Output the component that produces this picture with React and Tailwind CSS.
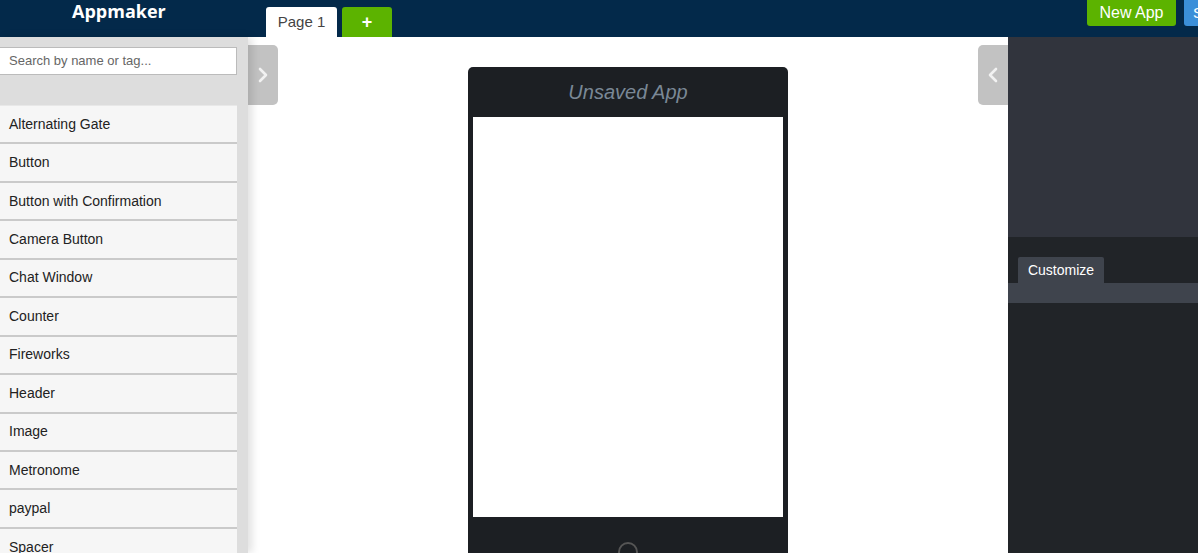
import React from "react";

const components = [
  "Alternating Gate",
  "Button",
  "Button with Confirmation",
  "Camera Button",
  "Chat Window",
  "Counter",
  "Fireworks",
  "Header",
  "Image",
  "Metronome",
  "paypal",
  "Spacer",
];

const Chevron = ({ dir }) => (
  <svg width="12" height="16" viewBox="0 0 12 16" fill="none">
    <path
      d={dir === "right" ? "M3 2l6 6-6 6" : "M9 2L3 8l6 6"}
      stroke="#f2f2f2"
      strokeWidth="2.6"
      strokeLinecap="round"
      strokeLinejoin="round"
    />
  </svg>
);

const App = () => {
  return (
    <div className="w-[1198px] h-[553px] overflow-hidden flex flex-col font-['Liberation_Sans',Arial,sans-serif] bg-white">
      {/* top bar */}
      <div className="h-[37px] shrink-0 bg-[#03294a] flex items-start">
        <div className="w-[266px] pl-[72px] text-white font-['Open_Sans',sans-serif] font-bold text-[18px] leading-[22px]">
          Appmaker
        </div>
        <div className="flex items-end h-full gap-[5px]">
          <div className="h-[30px] w-[71px] bg-white rounded-t-[3px] flex items-center justify-center text-[15px] text-[#444]">
            Page 1
          </div>
          <div className="h-[30px] w-[50px] bg-[#5cb300] rounded-t-[3px] flex items-center justify-center text-white text-[18px] font-bold">
            +
          </div>
        </div>
        <div className="flex-1" />
        <div className="h-[26px] w-[89px] bg-[#5cb300] rounded-b-[3px] flex items-center justify-center text-white text-[16px]">
          New App
        </div>
        <div className="h-[26px] w-[14px] ml-[8px] bg-[#3b8fd9] rounded-bl-[3px] flex items-center pl-[9px] text-white text-[15px] overflow-hidden whitespace-nowrap">
          Save
        </div>
      </div>

      {/* body */}
      <div className="flex-1 flex min-h-0">
        {/* sidebar */}
        <div className="w-[248px] shrink-0 bg-[#dddddd] pt-[10px] shadow-[4px_0_8px_rgba(0,0,0,0.12)] z-10 overflow-hidden">
          <div className="w-[238px] -ml-[1px] h-[28px] bg-white border border-[#bbbbbb] flex items-center pl-[9px] text-[13px] text-[#666]">
            Search by name or tag...
          </div>
          <div className="mt-[30px] w-[237px] border-t border-[#e8e8e8]">
            {components.map((name) => (
              <div
                key={name}
                className="h-[38.45px] bg-[#f6f6f6] border-b-2 border-[#cacaca] flex items-center pl-[9px] text-[14px] text-[#222]"
              >
                {name}
              </div>
            ))}
          </div>
        </div>

        {/* center */}
        <div className="relative w-[760px] shrink-0 bg-white">
          <div className="absolute left-0 top-[8px] w-[30px] h-[60px] bg-[#c2c2c2] rounded-r-[5px] flex items-center justify-center">
            <Chevron dir="right" />
          </div>
          <div className="absolute right-0 top-[8px] w-[30px] h-[60px] bg-[#c2c2c2] rounded-l-[5px] flex items-center justify-center">
            <Chevron dir="left" />
          </div>

          <div className="flex justify-center pt-[30px]">
            <div className="w-[320px] bg-[#1c1f23] rounded-t-[5px] px-[5px] pb-[25px]">
              <div className="h-[50px] flex items-center justify-center italic text-[20px] text-[#7a8896]">
                Unsaved App
              </div>
              <div className="h-[400px] bg-white" />
              <div className="flex justify-center pt-[25px]">
                <div className="w-[20px] h-[20px] rounded-full border-2 border-[#555]" />
              </div>
            </div>
          </div>
        </div>

        {/* right panel */}
        <div className="flex-1 flex flex-col bg-[#212428]">
          <div className="h-[200px] bg-[#31343d]" />
          <div className="pt-[20px] pl-[10px]">
            <div className="w-[86px] h-[26px] bg-[#3f444d] rounded-t-[2px] flex items-center justify-center text-[14px] text-white">
              Customize
            </div>
          </div>
          <div className="h-[20px] bg-[#3f444d]" />
        </div>
      </div>
    </div>
  );
};

export default App;
